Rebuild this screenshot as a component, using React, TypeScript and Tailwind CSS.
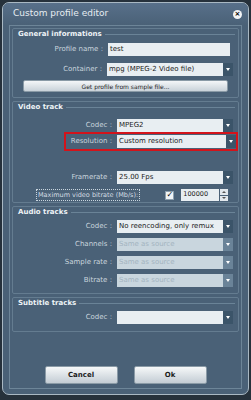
import React from "react";

const Arrow = ({ disabled }: { disabled?: boolean }) => (
  <div className={`w-[10px] h-full flex items-center justify-center ${disabled ? "bg-[#6a8398]" : "bg-[#3b5469]"}`}>
    <div className="w-0 h-0 border-l-[2.5px] border-r-[2.5px] border-t-[3px] border-l-transparent border-r-transparent border-t-white" />
  </div>
);

const Select = ({ value, disabled }: { value: string; disabled?: boolean }) => (
  <div className="flex-1 flex h-[13px] mr-[5px]">
    <div className={`flex-1 flex items-center pl-[2px] text-[7px] ${disabled ? "bg-[#c9d6de] text-[#a3b4c0]" : "bg-[#e8eef2] text-[#1c1c1c]"}`}>
      {value}
    </div>
    <Arrow disabled={disabled} />
  </div>
);

const Row = ({ label, labelW, children, className = "" }: { label: string; labelW: string; children: React.ReactNode; className?: string }) => (
  <div className={`flex items-center ${className}`}>
    <div className={`${labelW} shrink-0 text-right pr-[5px] text-[7px] text-[#c9d5de] whitespace-nowrap`}>{label}</div>
    {children}
  </div>
);

const Group = ({ title, className = "", children }: { title: string; className?: string; children?: React.ReactNode }) => (
  <div className={`border border-[#647c90] rounded-[2px] ${className}`}>
    <div className="flex items-center h-[9px] mt-[1px] pl-[5px] pr-[3px]">
      <span className="text-[7px] font-bold text-[#eef3f6] whitespace-nowrap">{title}</span>
      <div className="flex-1 h-px bg-[#6a8397] ml-[3px]" />
    </div>
    {children}
  </div>
);

export default function App() {
  return (
    <div className="w-[251px] h-[400px] bg-[#26313b] overflow-hidden" style={{ fontFamily: '"DejaVu Sans", Verdana, sans-serif' }}>
      <div className="ml-[2px] mt-[2px] w-[247px] h-[393px] rounded-[7px] border border-[#a9b8c3] bg-[#4a6177] flex flex-col overflow-hidden">
        {/* title bar */}
        <div className="h-[22px] flex items-center justify-between pl-[10px] pr-[6px] bg-gradient-to-b from-[#58708a] to-[#4a6177]">
          <span className="text-[9px] text-[#e6edf2]">Custom profile editor</span>
          <div className="w-[9px] h-[9px] rounded-full bg-[#f2f4f6] flex items-center justify-center text-[7px] font-bold leading-none text-black">×</div>
        </div>

        {/* content panel */}
        <div className="mx-[6px] mb-[5px] flex-1 border border-[#6d8598] p-[2px] flex flex-col gap-[3px]">
          <Group title="General informations" className="pb-[5px]">
            <Row label="Profile name :" labelW="w-[95px]" className="mt-[4px]">
              <div className="w-[122px] h-[13px] bg-[#e8eef2] text-[7px] text-[#1c1c1c] flex items-center pl-[2px]">test</div>
            </Row>
            <Row label="Container :" labelW="w-[94px]" className="mt-[7px]">
              <Select value="mpg (MPEG-2 Video file)" />
            </Row>
            <div className="mx-[10px] mt-[4px] h-[12px] rounded-[2px] border border-[#8a9aa6] bg-gradient-to-b from-[#f4f6f8] to-[#c9d2d9] flex items-center justify-center text-[6px] text-[#1c1c1c]">
              Get profile from sample file...
            </div>
          </Group>

          <Group title="Video track" className="pb-[1px]">
            <Row label="Codec :" labelW="w-[104px]" className="mt-[7px]">
              <Select value="MPEG2" />
            </Row>
            <div className="flex">
              <div className="w-[51px] shrink-0" />
              <div className="flex-1 border-2 border-[#d3131b] py-[1px] flex items-center">
                <div className="w-[51px] shrink-0 text-right pr-[5px] text-[7px] text-[#c9d5de] whitespace-nowrap">Resolution :</div>
                <div className="flex-1 flex h-[13px]">
                  <div className="flex-1 flex items-center pl-[2px] text-[7px] bg-[#e8eef2] text-[#1c1c1c]">Custom resolution</div>
                  <Arrow />
                </div>
              </div>
            </div>
            <Row label="Framerate :" labelW="w-[104px]" className="mt-[20px]">
              <Select value="25.00 Fps" />
            </Row>
            <div className="flex items-center mt-[5px]">
              <div className="ml-[23px] px-[1px] border border-dotted border-[#c9d5de] text-[6.5px] text-[#d4dde4] leading-[10px] whitespace-nowrap">
                Maximum video bitrate (Mb/s):
              </div>
              <div className="ml-[25px] w-[9px] h-[9px] bg-[#f1f4f6] border border-[#8ea0ae] flex items-center justify-center text-[8px] font-bold leading-none text-black">✓</div>
              <div className="ml-[7px] w-[38px] h-[12px] bg-[#e8eef2] text-[6.5px] text-[#1c1c1c] flex items-center pl-[2px]">100000</div>
              <div className="w-[8px] h-[12px] flex flex-col gap-px ml-px">
                <div className="flex-1 bg-[#e2e8ed] flex items-center justify-center">
                  <div className="w-0 h-0 border-l-[2px] border-r-[2px] border-b-[2px] border-l-transparent border-r-transparent border-b-[#555]" />
                </div>
                <div className="flex-1 bg-[#e2e8ed] flex items-center justify-center">
                  <div className="w-0 h-0 border-l-[2px] border-r-[2px] border-t-[2px] border-l-transparent border-r-transparent border-t-[#555]" />
                </div>
              </div>
            </div>
          </Group>

          <Group title="Audio tracks" className="pb-[6px]">
            <Row label="Codec :" labelW="w-[104px]" className="mt-[3px]">
              <Select value="No reencoding, only remux" />
            </Row>
            <Row label="Channels :" labelW="w-[104px]" className="mt-[5px]">
              <Select value="Same as source" disabled />
            </Row>
            <Row label="Sample rate :" labelW="w-[104px]" className="mt-[5px]">
              <Select value="Same as source" disabled />
            </Row>
            <Row label="Bitrate :" labelW="w-[104px]" className="mt-[5px]">
              <Select value="Same as source" disabled />
            </Row>
          </Group>

          <Group title="Subtitle tracks" className="pb-[7px]">
            <Row label="Codec :" labelW="w-[104px]" className="mt-[3px]">
              <Select value="" />
            </Row>
          </Group>

          <div className="flex-1 flex items-end justify-center gap-[16px] pb-[2px]">
            <button className="w-[73px] h-[18px] rounded-[2px] border border-[#8a9aa6] bg-gradient-to-b from-[#f6f8f9] to-[#c3ccd4] text-[7px] font-bold text-[#1c1c1c]">Cancel</button>
            <button className="w-[73px] h-[18px] rounded-[2px] border border-[#8a9aa6] bg-gradient-to-b from-[#f6f8f9] to-[#c3ccd4] text-[7px] font-bold text-[#1c1c1c]">Ok</button>
          </div>
        </div>
      </div>
    </div>
  );
}
